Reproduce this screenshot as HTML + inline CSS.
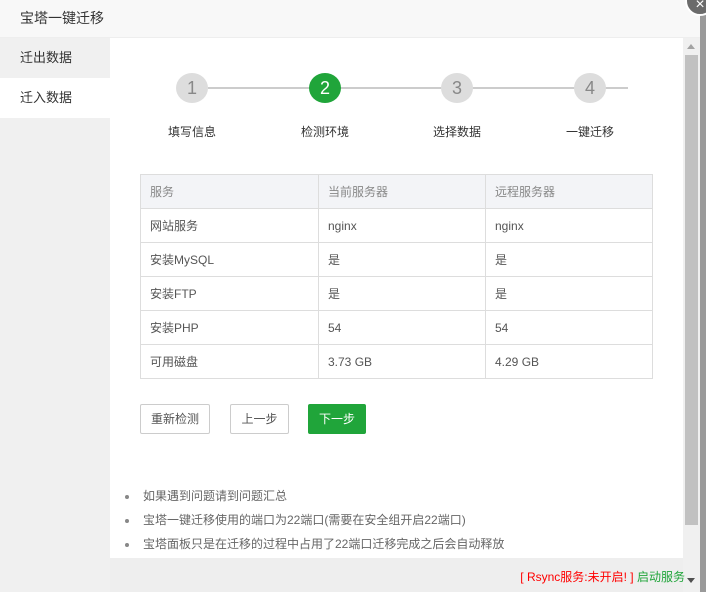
<!DOCTYPE html>
<html><head><meta charset="utf-8"><style>
*{margin:0;padding:0;box-sizing:border-box}
body{width:706px;height:592px;overflow:hidden;background:#eee;font-family:"Liberation Sans","Noto Sans CJK SC",sans-serif;font-size:12px;color:#333;position:relative}
.hdr{position:absolute;left:0;top:0;width:700px;height:38px;background:#f8f8f8;border-bottom:1px solid #eee;padding-left:20px;line-height:36px;font-size:14px;color:#333}
.edge{position:absolute;left:700px;top:10px;width:6px;height:582px;background:#9a9a9a}
.close{position:absolute;left:685px;top:-14px;width:30px;height:30px;border-radius:50%;background:#6b6b6b;border:2px solid #fff;color:#fff;text-align:center;line-height:34px;font-size:16px}
.side{position:absolute;left:0;top:38px;width:110px;height:554px;background:#f0f0f0}
.side div{height:40px;line-height:40px;padding-left:20px;font-size:13px}
.side .on{background:#fff}
.main{position:absolute;left:110px;top:38px;width:573px;height:520px;background:#fff}
.sb{position:absolute;left:683px;top:38px;width:17px;height:554px;background:#f0f0f0}
.thumb{position:absolute;left:2px;top:17px;width:13px;height:470px;background:#c1c1c1}
.arr{position:absolute;left:4px;top:6px;width:0;height:0;border-left:4px solid transparent;border-right:4px solid transparent;border-bottom:5px solid #a3a3a3}
.arrd{position:absolute;left:4px;top:540px;border-left:4px solid transparent;border-right:4px solid transparent;border-top:5px solid #505050}
.line{position:absolute;left:98px;top:49px;width:420px;height:2px;background:#ccc}
.c{position:absolute;top:35px;width:32px;height:30px;border-radius:50%;background:#ddd;color:#888;font-size:18px;text-align:center;line-height:30px}
.c.g{background:#20a53a;color:#fff}
.lb{position:absolute;top:85px;width:100px;text-align:center;font-size:12px;margin-left:-50px}
table{position:absolute;left:30px;top:136px;width:513px;border-collapse:collapse}
td{border:1px solid #ddd;height:34px;padding-left:9px;font-size:12px;color:#555}
tr.h td{background:#f3f4f7;color:#888;height:34px}
.btn{position:absolute;top:366px;height:30px;border:1px solid #ccc;border-radius:2px;line-height:28px;text-align:center;color:#555;background:#fff}
ul{position:absolute;left:15px;top:446px;list-style:none;color:#666}
li{height:24px;line-height:24px;padding-left:18px;position:relative}
li:before{content:"";position:absolute;left:0;top:11px;width:4px;height:4px;border-radius:50%;background:#888}
.ft{position:absolute;right:21px;top:568px;font-size:12px}
</style></head><body>
<div class="hdr">宝塔一键迁移</div>
<div class="side"><div>迁出数据</div><div class="on">迁入数据</div></div>
<div class="main">
<div class="line"></div>
<div class="c" style="left:66px">1</div>
<div class="c g" style="left:199px">2</div>
<div class="c" style="left:331px">3</div>
<div class="c" style="left:464px">4</div>
<div class="lb" style="left:82px">填写信息</div>
<div class="lb" style="left:215px">检测环境</div>
<div class="lb" style="left:347px">选择数据</div>
<div class="lb" style="left:480px">一键迁移</div>
<table>
<tr class="h"><td style="width:178px">服务</td><td style="width:167px">当前服务器</td><td>远程服务器</td></tr>
<tr><td>网站服务</td><td>nginx</td><td>nginx</td></tr>
<tr><td>安装MySQL</td><td>是</td><td>是</td></tr>
<tr><td>安装FTP</td><td>是</td><td>是</td></tr>
<tr><td>安装PHP</td><td>54</td><td>54</td></tr>
<tr><td>可用磁盘</td><td>3.73 GB</td><td>4.29 GB</td></tr>
</table>
<div class="btn" style="left:30px;width:70px">重新检测</div>
<div class="btn" style="left:120px;width:59px">上一步</div>
<div class="btn" style="left:198px;width:58px;background:#20a53a;border-color:#20a53a;color:#fff">下一步</div>
<ul><li>如果遇到问题请到问题汇总</li><li>宝塔一键迁移使用的端口为22端口(需要在安全组开启22端口)</li><li>宝塔面板只是在迁移的过程中占用了22端口迁移完成之后会自动释放</li></ul>
</div>
<div class="sb"><div class="arr"></div><div class="thumb"></div><div class="arrd"></div></div>
<div class="ft"><span style="color:#f00">[ Rsync服务:未开启! ]</span> <span style="color:#20a53a">启动服务</span></div>
<div class="edge"></div>
<div class="close">×</div>
</body></html>
